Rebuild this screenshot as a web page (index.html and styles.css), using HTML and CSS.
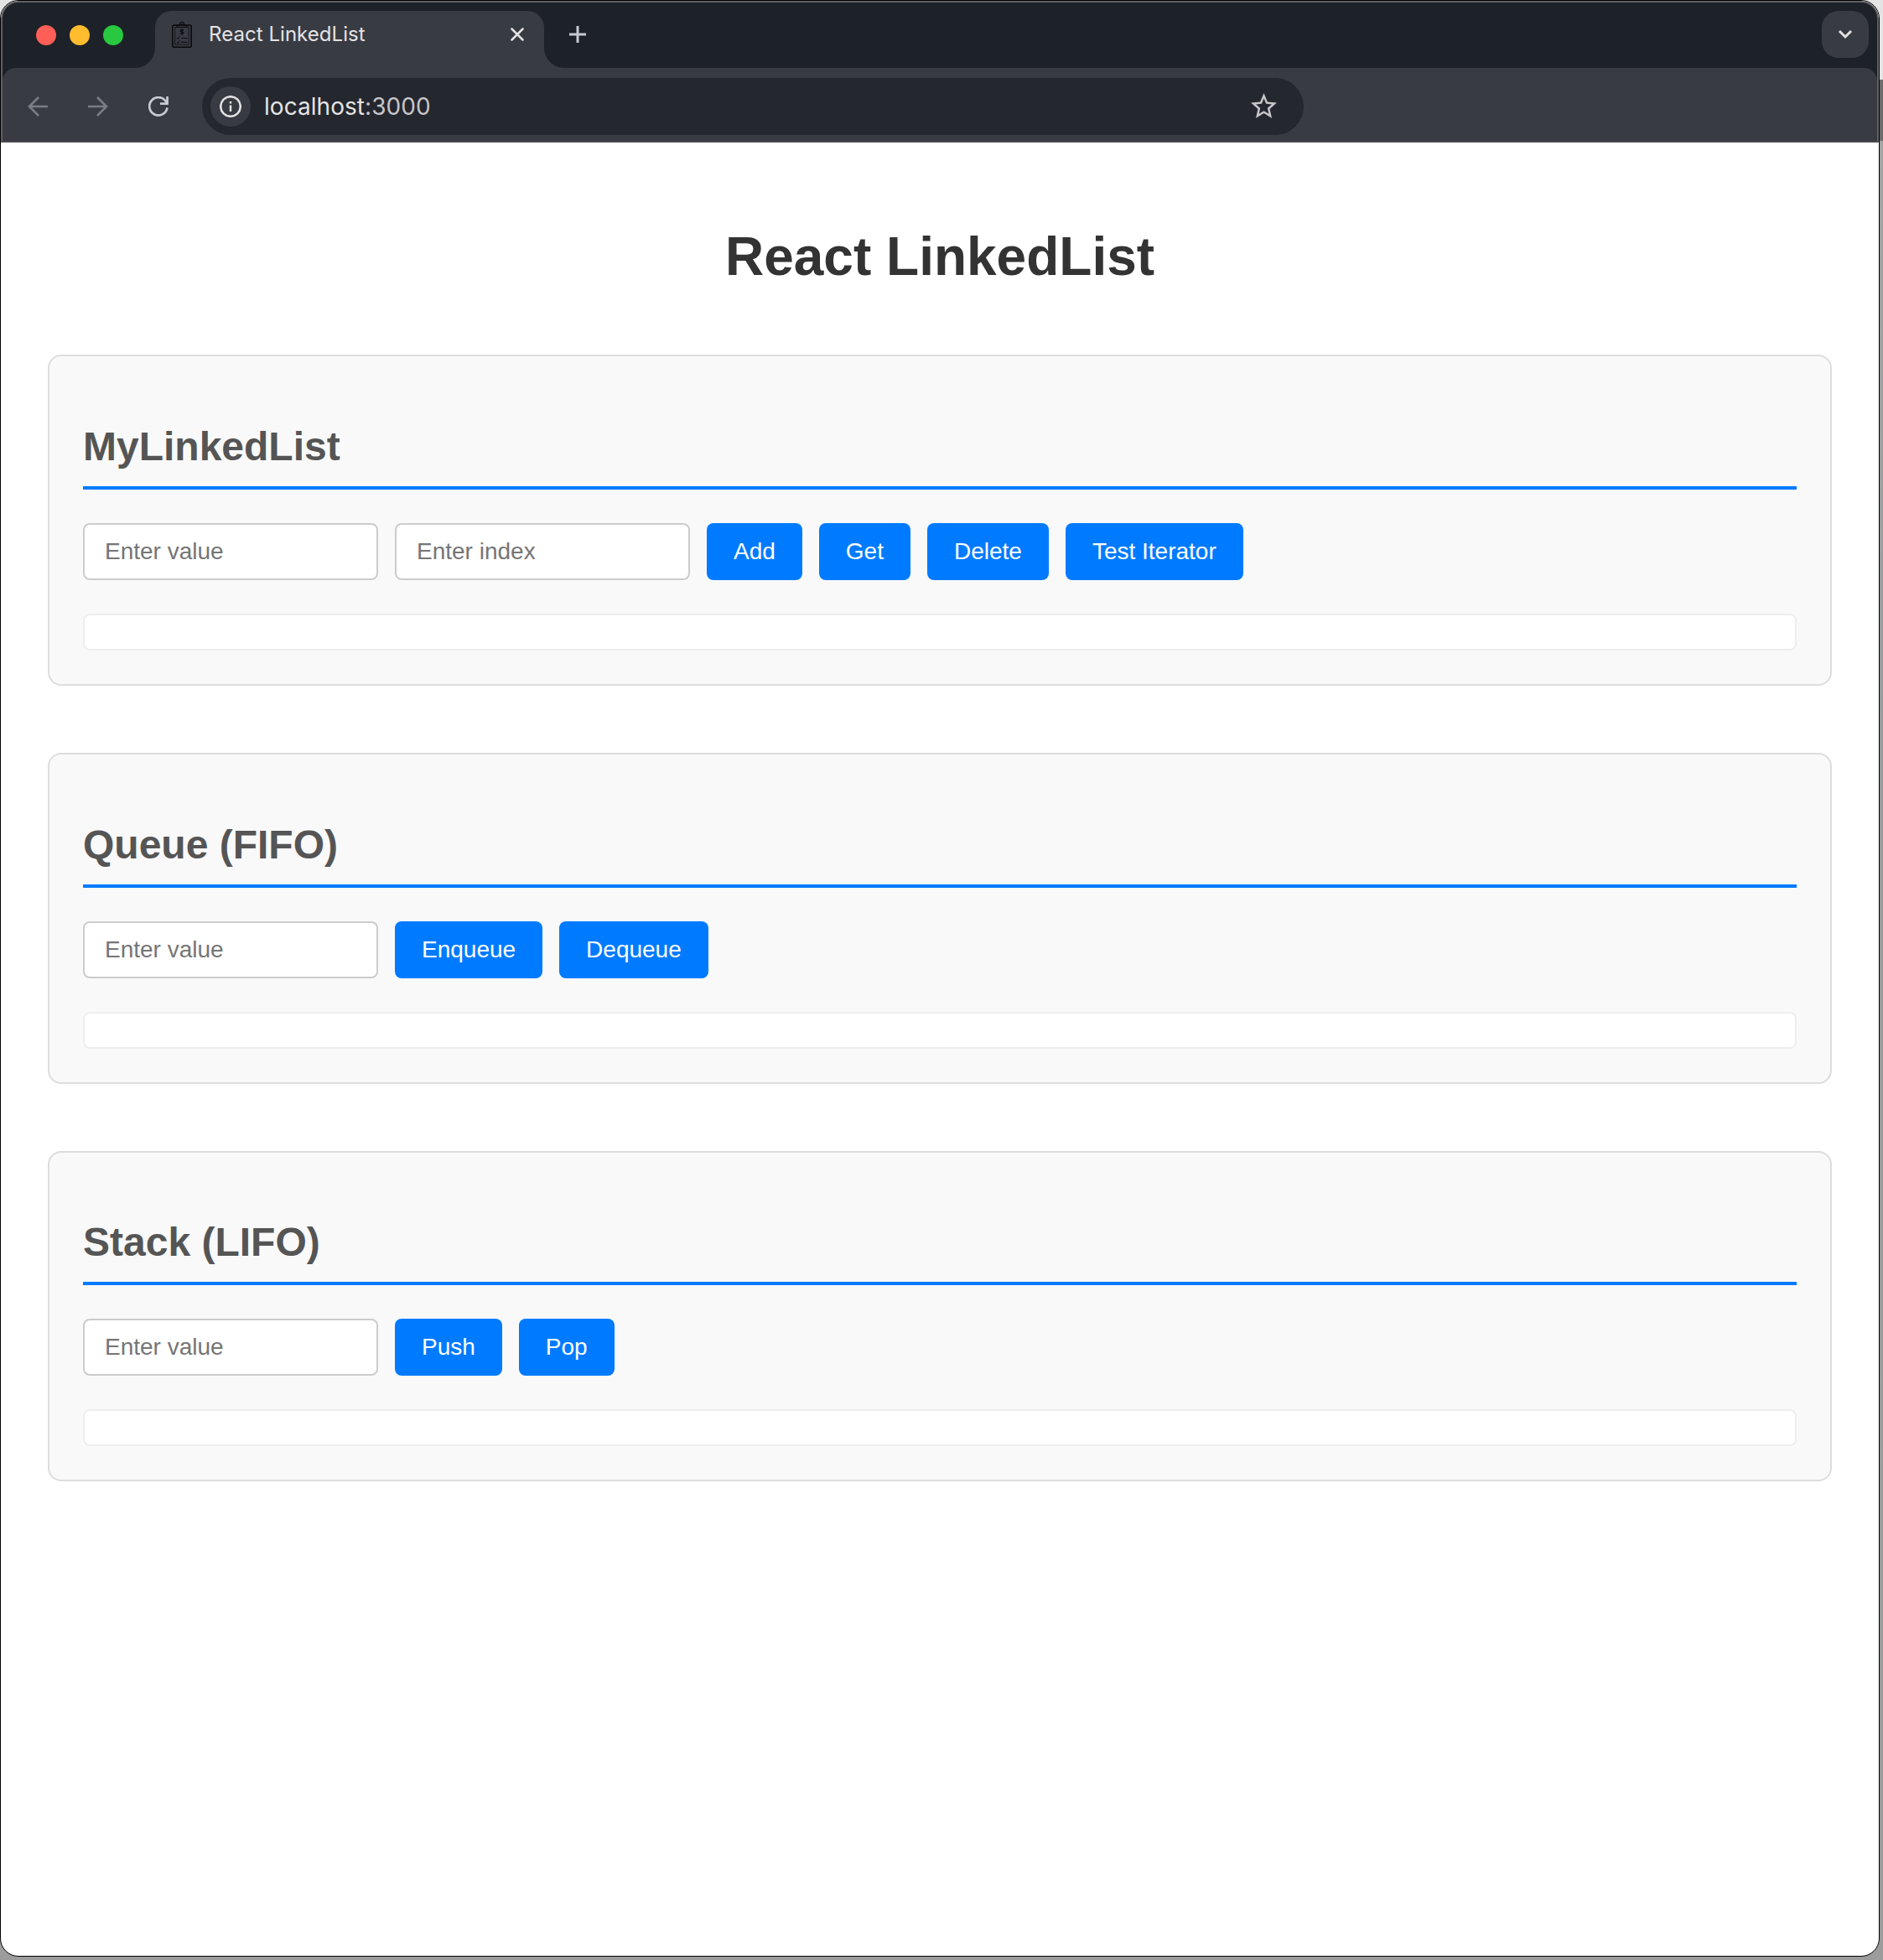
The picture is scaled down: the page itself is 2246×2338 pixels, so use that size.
FILE: index.html
```html
<!DOCTYPE html>
<html lang="en">
<head>
<meta charset="utf-8">
<title>React LinkedList</title>
<link rel="stylesheet" href="styles.css">
</head>
<body>
<div class="window">
  <header class="chrome">
    <div class="tabstrip">
      <div class="lights"><i class="light close"></i><i class="light minimize"></i><i class="light expand"></i></div>
      <div class="tab">
        <svg class="favicon" width="24" height="32" viewBox="0 0 24 32" fill="none" stroke="#08090b">
          <rect x=".8" y="5" width="22.400" height="26.200" rx="2" stroke-width="1.500"/>
          <path d="M6 7.500H3.800v20.700h16.400V7.500h-2" stroke-width=".7"/>
          <path d="M6 7.500c0-2 2-2.500 3.500-2.500C9.500 0 14.500 0 14.500 5c1.500 0 3.500.5 3.500 2.500z" stroke-width="1.200"/>
          <circle cx="12" cy="3.800" r=".6" stroke-width=".8"/>
          <path d="M14 11.300c-1-1-4-.8-4 .7 0 1.700 4 .7 4 2.300 0 1.500-3 1.700-4.200.6M12 9.500v7" stroke-width="1.100"/>
          <path d="M6 20l1.300 1.500L9.500 18M6 25l1.300 1.500L9.500 23M11 20.500h7.500M11 25.300h7.500" stroke-width="1"/>
        </svg>
        <span class="tab-title">React LinkedList</span>
        <svg class="tab-close" width="16" height="16" viewBox="0 0 16 16" stroke="#e3e3e3" stroke-width="2.500" stroke-linecap="round"><path d="M1.500 1.500l13 13M14.500 1.500l-13 13"/></svg>
      </div>
      <svg class="new-tab" width="20" height="20" viewBox="0 0 20 20" stroke="#c7cad1" stroke-width="3"><path d="M10 0v20M0 10h20"/></svg>
      <div class="tab-search">
        <svg width="18" height="12" viewBox="0 0 18 12" fill="none" stroke="#e3e3e3" stroke-width="3"><path d="M2 2l7 7 7-7"/></svg>
      </div>
    </div>
    <div class="toolbar">
      <div class="nav">
        <svg width="24" height="24" viewBox="0 0 24 24" fill="none" stroke="#7b7c82" stroke-width="2.700"><path d="M24 12H2M13 1L2 12l11 11"/></svg>
        <svg width="24" height="24" viewBox="0 0 24 24" fill="none" stroke="#7b7c82" stroke-width="2.700"><path d="M0 12h22M11 1l11 11-11 11"/></svg>
        <svg width="24" height="24" viewBox="0 0 24 24" fill="none" stroke="#c7cad1" stroke-width="2.700"><path d="M22.500 13.500A10.700 10.700 0 1 1 20.200 5L22.500 8.400M22.600 0v8.600H14"/></svg>
      </div>
      <div class="omnibox">
        <div class="site-info">
          <svg width="26" height="26" viewBox="0 0 26 26" fill="none" stroke="#e3e3e3" stroke-width="2.500"><circle cx="13" cy="13" r="11.800"/><path d="M13 11.500V19M13 7v2.600"/></svg>
        </div>
        <span class="url">localhost<span class="port">:3000</span></span>
        <svg class="star" width="31" height="30" viewBox="2 2 20 19" preserveAspectRatio="none" fill="#c7c5c8"><path d="M22 9.240l-7.190-.62L12 2 9.190 8.630 2 9.240l5.460 4.730L5.820 21 12 17.270 18.180 21l-1.630-7.030L22 9.240zM12 15.400l-3.760 2.270 1-4.280-3.320-2.880 4.380-.38L12 6.100l1.710 4.040 4.380.38-3.320 2.880 1 4.280L12 15.400z"/></svg>
      </div>
    </div>
  </header>
  <main class="page">
    <h1>React LinkedList</h1>
    <section class="card">
      <h2>MyLinkedList</h2>
      <div class="controls">
        <input type="text" placeholder="Enter value">
        <input type="text" placeholder="Enter index">
        <button>Add</button><button>Get</button><button>Delete</button><button>Test Iterator</button>
      </div>
      <div class="output"></div>
    </section>
    <section class="card">
      <h2>Queue (FIFO)</h2>
      <div class="controls">
        <input type="text" placeholder="Enter value">
        <button>Enqueue</button><button>Dequeue</button>
      </div>
      <div class="output"></div>
    </section>
    <section class="card">
      <h2>Stack (LIFO)</h2>
      <div class="controls">
        <input type="text" placeholder="Enter value">
        <button>Push</button><button>Pop</button>
      </div>
      <div class="output"></div>
    </section>
  </main>
</div>
</body>
</html>
```
FILE: styles.css
```css
* { box-sizing: border-box; }

body {
  margin: 0;
  width: 2246px;
  height: 2338px;
  overflow: hidden;
  background: linear-gradient(#e4e4e4 0 95px, #6c6c6c 95px 168px, #a2a4a4 168px, #999c9c 900px, #9c9c9c);
  font-family: "Liberation Sans", Arial, sans-serif;
}

.window {
  display: flex;
  flex-direction: column;
  width: 2242px;
  height: 2334px;
  border: 1px solid #000;
  border-radius: 22px;
  overflow: hidden;
  background: #fff;
}

.chrome {
  height: 169px;
  border: 2px solid #5f6065;
  border-bottom-color: #4a484d;
  border-radius: 21px 21px 0 0;
  background: #1d2128;
  font-family: Inter, sans-serif;
  overflow: hidden;
}

.tabstrip {
  display: flex;
  align-items: flex-start;
  height: 78px;
  padding: 10px 10px 0 40px;
}

.lights { display: flex; gap: 16px; margin-top: 17px; }
.light { width: 24px; height: 24px; border-radius: 50%; }
.close { background: #ff5f57; }
.minimize { background: #febc2e; }
.expand { background: #28c840; }

.tab {
  position: relative;
  display: flex;
  align-items: center;
  width: 464px;
  height: 68px;
  margin-left: 38px;
  padding: 0 24px 12px 20px;
  border-radius: 20px 20px 0 0;
  background: #393b43;
}
/* concave feet where the tab meets the toolbar */
.tab::before,
.tab::after {
  content: "";
  position: absolute;
  bottom: 0;
  width: 24px;
  height: 24px;
}
.tab::before { right: 100%; background: radial-gradient(circle at 0 0, transparent 23.500px, #393b43 24.500px); }
.tab::after { left: 100%; background: radial-gradient(circle at 100% 0, transparent 23.500px, #393b43 24.500px); }

.tab-title { margin: 0 0 2px 20px; font-size: 24px; letter-spacing: .05px; color: #e3e3e3; white-space: nowrap; }
.tab-close { margin-left: auto; }
.new-tab { margin: 18px 0 0 30px; }

.tab-search {
  display: flex;
  align-items: center;
  justify-content: center;
  width: 56px;
  height: 56px;
  margin-left: auto;
  border-radius: 20px;
  background: #393b43;
}

.toolbar {
  display: flex;
  align-items: center;
  height: 87px;
  padding: 5px 0 0 30px;
  border-radius: 16px 16px 0 0;
  background: #393b43;
}

.nav { display: flex; gap: 48px; }

.omnibox {
  display: flex;
  align-items: center;
  width: 1314px;
  height: 68px;
  margin-left: 40px;
  padding: 0 32px 0 10px;
  border-radius: 34px;
  background: #24272e;
}

.site-info {
  display: flex;
  align-items: center;
  justify-content: center;
  width: 48px;
  height: 48px;
  border-radius: 50%;
  background: #393b43;
}

.url { margin-left: 16px; font-size: 28px; letter-spacing: .05px; color: #e3e3e3; }
.port { color: #c7c5c8; }
.star { margin: 0 0 2px auto; }

.page { flex: 1; padding: 100px 56px 0; }

h1 {
  margin: 0 0 80.9px;
  font-size: 64px;
  line-height: 72px;
  text-align: center;
  color: #333;
}

.card {
  margin-bottom: 80px;
  padding: 40px;
  border: 2px solid #ddd;
  border-radius: 16px;
  background: #f9f9f9;
}

h2 {
  margin: .83em 0 40px;
  padding-bottom: 20px;
  border-bottom: 4px solid #007bff;
  font-size: 48px;
  line-height: 55px;
  color: #555;
}

.controls { display: flex; gap: 20px; margin-bottom: 40px; }

input,
button {
  height: 68px;
  border-radius: 8px;
  font: 28px "Liberation Sans", Arial, sans-serif;
}
input { width: 352px; padding: 0 24px; border: 2px solid #ccc; background: #fff; }
input::placeholder { color: #757575; }
button { padding: 0 32px; border: 0; background: #007bff; color: #fff; }

.output { height: 44px; border: 2px solid #eee; border-radius: 8px; background: #fff; }
```
